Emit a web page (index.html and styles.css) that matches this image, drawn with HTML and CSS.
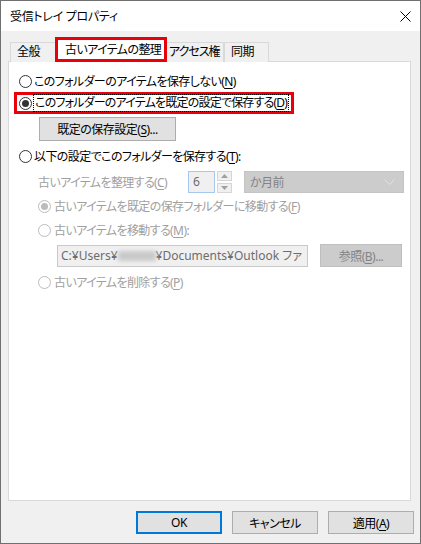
FILE: index.html
```html
<!DOCTYPE html>
<html lang="ja">
<head>
    <meta charset="UTF-8">
    <title>受信トレイ プロパティ</title>
    <link rel="stylesheet" href="styles.css">
</head>
<body>
    <div class="window">
        <div class="titlebar">
            <span class="title">受信トレイ プロパティ</span>
            <svg class="close" width="11" height="11" viewBox="0 0 11 11">
                <path d="M0.5 0.5 L10.5 10.5 M10.5 0.5 L0.5 10.5" stroke="#000" stroke-width="1" fill="none"/>
            </svg>
        </div>

        <div class="content">
            <div class="tabs">
                <div class="tab tab-general">全般</div>
                <div class="tab tab-active">古いアイテムの整理</div>
                <div class="tab tab-access">アクセス権</div>
                <div class="tab tab-sync">同期</div>
            </div>

            <div class="panel">
                <div class="row">
                    <span class="radio"></span>
                    <span class="label">このフォルダーのアイテムを保存しない(<u>N</u>)</span>
                </div>

                <div class="row row-marked">
                    <span class="radio checked"></span>
                    <span class="label focused">このフォルダーのアイテムを既定の設定で保存する(<u>D</u>)</span>
                </div>

                <div class="button-row">
                    <button class="button btn-default-settings">既定の保存設定(<u>S</u>)...</button>
                </div>

                <div class="row row-custom">
                    <span class="radio"></span>
                    <span class="label">以下の設定でこのフォルダーを保存する(<u>T</u>):</span>
                </div>

                <div class="row sub-row">
                    <span class="label disabled age-label">古いアイテムを整理する(<u>C</u>)</span>
                    <div class="spin-field">6</div>
                    <div class="spin-buttons">
                        <div class="spin-btn">
                            <svg width="7" height="4" viewBox="0 0 7 4"><path d="M0 4 L3.5 0 L7 4 Z" fill="#a0a0a0"/></svg>
                        </div>
                        <div class="spin-btn">
                            <svg width="7" height="4" viewBox="0 0 7 4"><path d="M0 0 L3.5 4 L7 0 Z" fill="#a0a0a0"/></svg>
                        </div>
                    </div>
                    <div class="dropdown">
                        <span>か月前</span>
                        <svg width="11" height="6" viewBox="0 0 11 6"><path d="M0.5 0.5 L5.5 5.5 L10.5 0.5" stroke="#e3e3e3" stroke-width="1" fill="none"/></svg>
                    </div>
                </div>

                <div class="row sub-row sub-radio">
                    <span class="radio disabled checked"></span>
                    <span class="label disabled">古いアイテムを既定の保存フォルダーに移動する(<u>F</u>)</span>
                </div>

                <div class="row sub-row sub-radio">
                    <span class="radio disabled"></span>
                    <span class="label disabled">古いアイテムを移動する(<u>M</u>):</span>
                </div>

                <div class="path-row">
                    <div class="path-field">C:¥Users¥<span class="blurred"></span>¥Documents¥Outlook ファ</div>
                    <button class="button btn-browse">参照(<u>B</u>)...</button>
                </div>

                <div class="row sub-row sub-radio row-delete">
                    <span class="radio disabled"></span>
                    <span class="label disabled">古いアイテムを削除する(<u>P</u>)</span>
                </div>
            </div>

            <div class="footer">
                <button class="button btn-footer btn-ok">OK</button>
                <button class="button btn-footer">キャンセル</button>
                <button class="button btn-footer">適用(<u>A</u>)</button>
            </div>
        </div>
    </div>
</body>
</html>
```

FILE: styles.css
```css
body {
    margin: 0;
    font-family: "Noto Sans", "Noto Sans CJK JP", sans-serif;
    font-size: 12px;
    font-feature-settings: "palt";
    letter-spacing: -0.6px;
    color: #000;
    background: #fff;
}

u {
    text-decoration-thickness: 1px;
    text-underline-offset: 2px;
}

.window {
    width: 421px;
    height: 544px;
    box-sizing: border-box;
    border: 1px solid #707070;
    display: flex;
    flex-direction: column;
}

.titlebar {
    height: 30px;
    flex: none;
    background: #fff;
    display: flex;
    align-items: center;
    justify-content: space-between;
    padding: 0 9px 0 9px;
}

.title {
    font-size: 12px;
    letter-spacing: -0.3px;
}

.close {
    display: block;
    margin-top: 1px;
}

.content {
    flex: 1;
    background: #f0f0f0;
    padding: 6px 0 0 7px;
}

/* Tabs */
.tabs {
    display: flex;
    align-items: flex-end;
    height: 25px;
    padding-left: 2px;
    margin-bottom: -1px;
}

.tab {
    box-sizing: border-box;
    height: 20px;
    line-height: 18px;
    border: 1px solid #d9d9d9;
    border-bottom: none;
    background: #f0f0f0;
    padding-left: 5px;
    white-space: nowrap;
    overflow: hidden;
}

.tab-general {
    width: 45px;
    border-right: none;
    padding-left: 6px;
}

.tab-active {
    position: relative;
    z-index: 1;
    width: 112px;
    height: 25px;
    line-height: 19px;
    border: 3px solid #e8000b;
    background: #fff;
    padding-left: 7px;
}

.tab-access {
    width: 57px;
    border-left: none;
    padding-left: 2px;
    letter-spacing: -1px;
}

.tab-sync {
    width: 45px;
    border-left: 1px solid #d9d9d9;
    padding-left: 6px;
}

/* Panel */
.panel {
    width: 403px;
    height: 440px;
    box-sizing: border-box;
    background: #fff;
    border: 1px solid #d9d9d9;
    padding: 8px 0 0 10px;
    display: flex;
    flex-direction: column;
}

.row {
    display: flex;
    align-items: center;
    height: 22px;
    white-space: nowrap;
}

.row-marked {
    box-sizing: border-box;
    align-self: flex-start;
    margin-left: -5px;
    padding: 0 3px 0 2px;
    border: 3px solid #e8000b;
    letter-spacing: -0.8px;
}

.radio {
    flex: none;
    width: 13px;
    height: 13px;
    box-sizing: border-box;
    border: 1px solid #333;
    border-radius: 50%;
    background: #fff;
    margin-right: 2px;
    display: flex;
    align-items: center;
    justify-content: center;
}

.radio.checked::after {
    content: "";
    width: 7px;
    height: 7px;
    border-radius: 50%;
    background: #333;
}

.radio.disabled {
    border-color: #bcbcbc;
    margin-right: 3px;
}

.radio.disabled.checked::after {
    background: #bcbcbc;
}

.label.focused {
    outline: 1px dotted #000;
    outline-offset: 0;
    padding: 0 1px;
    line-height: 16px;
}

.label.disabled {
    color: #a0a0a0;
}

.button-row {
    margin: 3px 0 0 20px;
}

.button {
    font-family: inherit;
    font-size: 12px;
    font-feature-settings: "palt";
    letter-spacing: -0.5px;
    background: #e1e1e1;
    border: 1px solid #adadad;
    color: #000;
    padding: 0;
    box-sizing: border-box;
    white-space: nowrap;
}

.btn-default-settings {
    width: 137px;
    height: 24px;
}

.row-custom {
    margin-top: 4px;
}

.sub-row {
    padding-left: 19px;
    margin-top: 4px;
}

.sub-radio {
    margin-top: 2px;
}

.age-label {
    width: 150px;
}

.spin-field {
    box-sizing: border-box;
    width: 27px;
    height: 22px;
    border: 1px solid #a6c8ec;
    background: #f0f0f0;
    color: #6d6d6d;
    padding-left: 4px;
    line-height: 20px;
}

.spin-buttons {
    display: flex;
    flex-direction: column;
    gap: 2px;
    margin-left: 2px;
}

.spin-btn {
    box-sizing: border-box;
    width: 15px;
    height: 10px;
    border: 1px solid #d6d6d6;
    background: #f0f0f0;
    display: flex;
    align-items: center;
    justify-content: center;
}

.spin-btn svg {
    display: block;
}

.dropdown {
    box-sizing: border-box;
    width: 160px;
    height: 22px;
    margin-left: 12px;
    background: #cccccc;
    border: 1px solid #c4c4c4;
    color: #838383;
    display: flex;
    align-items: center;
    justify-content: space-between;
    padding: 0 8px 0 5px;
}

.dropdown svg {
    display: block;
}

.path-row {
    display: flex;
    align-items: center;
    margin: 3px 0 0 38px;
    height: 23px;
}

.path-field {
    box-sizing: border-box;
    width: 251px;
    height: 22px;
    border: 1px solid #c9c9c9;
    background: #f0f0f0;
    color: #6d6d6d;
    padding-left: 3px;
    line-height: 20px;
    letter-spacing: 0;
    white-space: nowrap;
    overflow: hidden;
}

.blurred {
    display: inline-block;
    width: 38px;
    height: 10px;
    vertical-align: -1px;
    background: #c8c8c8;
    filter: blur(2px);
}

.btn-browse {
    width: 82px;
    height: 23px;
    margin-left: 12px;
    background: #cccccc;
    border-color: #bfbfbf;
    color: #838383;
}

.row-delete {
    margin-top: 4px;
}

/* Footer buttons */
.footer {
    display: flex;
    justify-content: flex-end;
    gap: 10px;
    margin-top: 10px;
    padding-right: 6px;
}

.btn-footer {
    width: 86px;
    height: 23px;
}

.btn-ok {
    border: 2px solid #0078d7;
}
```
